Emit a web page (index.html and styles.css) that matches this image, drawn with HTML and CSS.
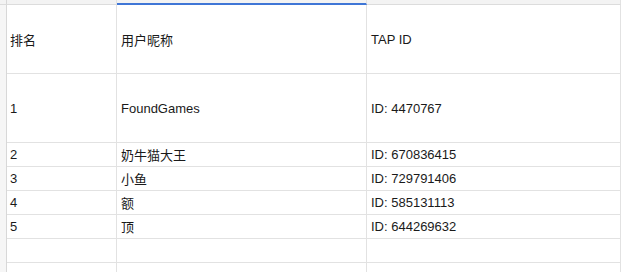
FILE: index.html
```html
<!DOCTYPE html>
<html lang="zh">
<head>
<meta charset="utf-8">
<link rel="stylesheet" href="styles.css">
</head>
<body>
<div class="topbar">
  <div class="corner"></div>
  <div class="colhead"></div>
  <div class="colhead selected"></div>
  <div class="colhead"></div>
</div>
<div class="sheet">
  <div class="rowheads"></div>
  <div class="grid">
    <div class="cell c1">排名</div><div class="cell c2">用户昵称</div><div class="cell c3">TAP ID</div>
    <div class="cell c1">1</div><div class="cell c2">FoundGames</div><div class="cell c3">ID: 4470767</div>
    <div class="cell c1">2</div><div class="cell c2">奶牛猫大王</div><div class="cell c3">ID: 670836415</div>
    <div class="cell c1">3</div><div class="cell c2">小鱼</div><div class="cell c3">ID: 729791406</div>
    <div class="cell c1">4</div><div class="cell c2">额</div><div class="cell c3">ID: 585131113</div>
    <div class="cell c1">5</div><div class="cell c2">顶</div><div class="cell c3">ID: 644269632</div>
    <div class="cell c1"></div><div class="cell c2"></div><div class="cell c3"></div>
    <div class="cell c1"></div><div class="cell c2"></div><div class="cell c3"></div>
  </div>
</div>
</body>
</html>
```
FILE: styles.css
```css
* { box-sizing: border-box; }
html, body {
  margin: 0;
  padding: 0;
  background: #fff;
  overflow: hidden;
}
body {
  font-family: "Liberation Sans", Arial, "Noto Sans CJK SC", sans-serif;
  font-size: 13px;
  color: #1a1a1a;
  width: 621px;
  height: 272px;
}
.topbar {
  display: grid;
  grid-template-columns: 7px 110px 250px 1fr;
  height: 5px;
}
.corner {
  background: #f3f3f3;
  border-right: 1px solid #d8d8d8;
  border-bottom: 1px solid #dcdcdc;
}
.colhead {
  background: #f3f3f3;
  border-right: 1px solid #e2e2e2;
  border-bottom: 1px solid #dcdcdc;
}
.colhead.selected {
  border-bottom: 2px solid #3f76d6;
}
.sheet {
  display: flex;
  height: 267px;
  overflow: hidden;
}
.rowheads {
  width: 7px;
  flex: none;
  background: #f6f6f6;
  border-right: 1px solid #d8d8d8;
}
.grid {
  flex: 1;
  display: grid;
  grid-template-columns: 110px 250px 1fr;
  grid-template-rows: 69px 69px;
  grid-auto-rows: 24px;
  align-content: start;
}
.cell {
  border-right: 1px solid #e2e2e2;
  border-bottom: 1px solid #e2e2e2;
  display: flex;
  align-items: center;
  padding-left: 4px;
  white-space: nowrap;
  overflow: hidden;
}
.cell.c1 { padding-left: 3px; }
```
